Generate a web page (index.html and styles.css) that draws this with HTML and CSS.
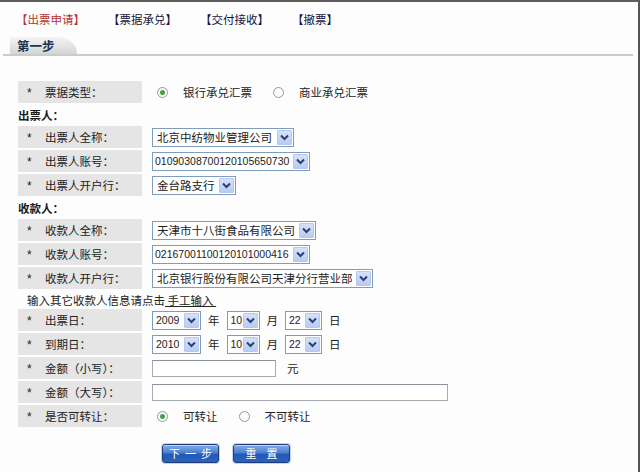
FILE: index.html
```html
<!DOCTYPE html>
<html lang="zh-CN">
<head>
<meta charset="utf-8">
<title>出票申请</title>
<link rel="stylesheet" href="styles.css">
</head>
<body>
<div class="page">
  <nav class="topnav">
    <a class="nav-item active">【出票申请】</a>
    <a class="nav-item">【票据承兑】</a>
    <a class="nav-item">【交付接收】</a>
    <a class="nav-item">【撤票】</a>
  </nav>
  <div class="stepbar"><span class="step-tab">第一步</span></div>

  <form class="form">
    <div class="row">
      <div class="label"><span class="star">*</span>票据类型：</div>
      <div class="field">
        <span class="radio checked"></span><span class="radio-text">银行承兑汇票</span>
        <span class="radio"></span><span class="radio-text">商业承兑汇票</span>
      </div>
    </div>

    <div class="group-title">出票人：</div>
    <div class="row">
      <div class="label"><span class="star">*</span>出票人全称：</div>
      <div class="field">
        <span class="select sel-drawer"><span class="sel-text">北京中纺物业管理公司</span><span class="sel-arrow"><svg viewBox="0 0 15 15" width="15" height="15"><path d="M4 5.5 L7.5 9 L11 5.5" fill="none" stroke="#2c3f73" stroke-width="2"/></svg></span></span>
      </div>
    </div>
    <div class="row">
      <div class="label"><span class="star">*</span>出票人账号：</div>
      <div class="field">
        <span class="select sel-acct"><span class="sel-text num">01090308700120105650730</span><span class="sel-arrow"><svg viewBox="0 0 15 15" width="15" height="15"><path d="M4 5.5 L7.5 9 L11 5.5" fill="none" stroke="#2c3f73" stroke-width="2"/></svg></span></span>
      </div>
    </div>
    <div class="row">
      <div class="label"><span class="star">*</span>出票人开户行：</div>
      <div class="field">
        <span class="select sel-bank1"><span class="sel-text">金台路支行</span><span class="sel-arrow"><svg viewBox="0 0 15 15" width="15" height="15"><path d="M4 5.5 L7.5 9 L11 5.5" fill="none" stroke="#2c3f73" stroke-width="2"/></svg></span></span>
      </div>
    </div>

    <div class="group-title">收款人：</div>
    <div class="row">
      <div class="label"><span class="star">*</span>收款人全称：</div>
      <div class="field">
        <span class="select sel-payee"><span class="sel-text">天津市十八街食品有限公司</span><span class="sel-arrow"><svg viewBox="0 0 15 15" width="15" height="15"><path d="M4 5.5 L7.5 9 L11 5.5" fill="none" stroke="#2c3f73" stroke-width="2"/></svg></span></span>
      </div>
    </div>
    <div class="row">
      <div class="label"><span class="star">*</span>收款人账号：</div>
      <div class="field">
        <span class="select sel-acct"><span class="sel-text num">02167001100120101000416</span><span class="sel-arrow"><svg viewBox="0 0 15 15" width="15" height="15"><path d="M4 5.5 L7.5 9 L11 5.5" fill="none" stroke="#2c3f73" stroke-width="2"/></svg></span></span>
      </div>
    </div>
    <div class="row">
      <div class="label"><span class="star">*</span>收款人开户行：</div>
      <div class="field">
        <span class="select sel-bank2"><span class="sel-text">北京银行股份有限公司天津分行营业部</span><span class="sel-arrow"><svg viewBox="0 0 15 15" width="15" height="15"><path d="M4 5.5 L7.5 9 L11 5.5" fill="none" stroke="#2c3f73" stroke-width="2"/></svg></span></span>
      </div>
    </div>
    <div class="hint">输入其它收款人信息请点击<a class="hint-link">&nbsp;手工输入&nbsp;</a></div>

    <div class="row">
      <div class="label"><span class="star">*</span>出票日：</div>
      <div class="field dates">
        <span class="select sel-year"><span class="sel-text num">2009</span><span class="sel-arrow"><svg viewBox="0 0 15 15" width="15" height="15"><path d="M4 5.5 L7.5 9 L11 5.5" fill="none" stroke="#2c3f73" stroke-width="2"/></svg></span></span>
        <span class="unit">年</span>
        <span class="select sel-month"><span class="sel-text num">10</span><span class="sel-arrow"><svg viewBox="0 0 15 15" width="15" height="15"><path d="M4 5.5 L7.5 9 L11 5.5" fill="none" stroke="#2c3f73" stroke-width="2"/></svg></span></span>
        <span class="unit">月</span>
        <span class="select sel-day"><span class="sel-text num">22</span><span class="sel-arrow"><svg viewBox="0 0 15 15" width="15" height="15"><path d="M4 5.5 L7.5 9 L11 5.5" fill="none" stroke="#2c3f73" stroke-width="2"/></svg></span></span>
        <span class="unit">日</span>
      </div>
    </div>
    <div class="row">
      <div class="label"><span class="star">*</span>到期日：</div>
      <div class="field dates">
        <span class="select sel-year"><span class="sel-text num">2010</span><span class="sel-arrow"><svg viewBox="0 0 15 15" width="15" height="15"><path d="M4 5.5 L7.5 9 L11 5.5" fill="none" stroke="#2c3f73" stroke-width="2"/></svg></span></span>
        <span class="unit">年</span>
        <span class="select sel-month"><span class="sel-text num">10</span><span class="sel-arrow"><svg viewBox="0 0 15 15" width="15" height="15"><path d="M4 5.5 L7.5 9 L11 5.5" fill="none" stroke="#2c3f73" stroke-width="2"/></svg></span></span>
        <span class="unit">月</span>
        <span class="select sel-day"><span class="sel-text num">22</span><span class="sel-arrow"><svg viewBox="0 0 15 15" width="15" height="15"><path d="M4 5.5 L7.5 9 L11 5.5" fill="none" stroke="#2c3f73" stroke-width="2"/></svg></span></span>
        <span class="unit">日</span>
      </div>
    </div>
    <div class="row">
      <div class="label"><span class="star">*</span>金额（小写）：</div>
      <div class="field">
        <span class="textbox tb-small"></span><span class="unit-yuan">元</span>
      </div>
    </div>
    <div class="row">
      <div class="label"><span class="star">*</span>金额（大写）：</div>
      <div class="field">
        <span class="textbox tb-large"></span>
      </div>
    </div>
    <div class="row">
      <div class="label"><span class="star">*</span>是否可转让：</div>
      <div class="field">
        <span class="radio checked"></span><span class="radio-text">可转让</span>
        <span class="radio"></span><span class="radio-text">不可转让</span>
      </div>
    </div>

    <div class="buttons">
      <span class="btn btn-next">下一步</span>
      <span class="btn btn-reset">重置</span>
    </div>
  </form>
</div>
</body>
</html>
```

FILE: styles.css
```css
* {
  box-sizing: border-box;
  margin: 0;
  padding: 0;
}

html, body {
  width: 640px;
  height: 472px;
  overflow: hidden;
}

body {
  font-family: "Noto Sans CJK SC", "Liberation Sans", sans-serif;
  font-size: 11.5px;
  color: #222;
  background: #fdfdfe;
}

.page {
  height: 472px;
  border-top: 2px solid #5e5e5e;
  border-right: 2px solid #555;
}

/* top navigation */
.topnav {
  display: flex;
  gap: 23px;
  height: 35px;
  padding: 9px 0 0 16px;
  line-height: 16px;
}

.nav-item {
  color: #14143a;
  text-decoration: none;
}

.nav-item.active {
  color: #b3322e;
}

/* step bar */
.stepbar {
  height: 19px;
  margin: 0 5px 0 3px;
  border-bottom: 2px solid #cbcbcb;
  padding-left: 7px;
  display: flex;
}

.step-tab {
  width: 67px;
  height: 17px;
  padding-left: 7px;
  line-height: 17px;
  font-size: 12.5px;
  font-weight: bold;
  color: #1d3656;
  background: linear-gradient(#f4f4f4, #d3d6d6);
  border-top-right-radius: 18px 17px;
}

/* form */
.form {
  margin-top: 25px;
  padding-left: 18px;
}

.row {
  display: flex;
  height: 22px;
  margin-bottom: 2px;
}

.label {
  width: 124px;
  background: #e5e5e5;
  padding-left: 9px;
  display: flex;
  align-items: center;
  line-height: 16px;
}

.star {
  width: 18px;
  font-family: "Liberation Sans", sans-serif;
  font-size: 12px;
  position: relative;
  top: 1px;
}

.field {
  display: flex;
  align-items: center;
  padding-left: 10px;
  line-height: 16px;
}

.group-title {
  height: 21px;
  line-height: 21px;
  font-weight: bold;
  color: #1a1a1a;
}

.hint {
  height: 18px;
  line-height: 18px;
  padding-left: 9px;
}

.hint-link {
  text-decoration: underline;
  color: #222;
}

/* radio */
.radio {
  width: 11px;
  height: 11px;
  border: 1px solid #8e9aa6;
  border-radius: 50%;
  background: #fbfbfb;
  margin-left: 5px;
  margin-right: 15px;
  display: flex;
  align-items: center;
  justify-content: center;
}

.radio.checked::after {
  content: "";
  width: 5px;
  height: 5px;
  border-radius: 50%;
  background: #45a045;
}

.radio-text {
  margin-right: 16px;
}

/* select */
.select {
  height: 19px;
  border: 1px solid #7f9db9;
  background: #fff;
  display: flex;
  align-items: center;
}

.sel-text {
  flex: 1;
  padding-left: 4px;
  white-space: nowrap;
  overflow: hidden;
}

.sel-text.num {
  font-family: "Liberation Sans", sans-serif;
  font-size: 10.5px;
  padding-left: 2px;
}

.sel-arrow {
  width: 15px;
  height: 15px;
  margin-right: 1px;
  background: linear-gradient(#d6e2fb, #b9cbf3);
  border: 1px solid #b6c8ee;
  border-radius: 1px;
  display: flex;
}

.sel-arrow svg {
  margin: -1px;
}

.sel-drawer { width: 142px; }
.sel-acct { width: 158px; }
.sel-bank1 { width: 84px; }
.sel-payee { width: 164px; }
.sel-bank2 { width: 221px; }
.sel-year { width: 49px; }
.sel-month { width: 33px; }
.sel-day { width: 37px; }

.sel-year .sel-text.num,
.sel-month .sel-text.num,
.sel-day .sel-text.num {
  padding-left: 3px;
}

.dates {
  gap: 7px;
}

/* text boxes */
.textbox {
  height: 17px;
  border: 1px solid #a4abb3;
  border-top-color: #8a939c;
  background: #fff;
}

.tb-small { width: 124px; }
.tb-large { width: 296px; }

.unit-yuan {
  margin-left: 11px;
}

/* buttons */
.buttons {
  display: flex;
  gap: 14px;
  margin-top: 17px;
  padding-left: 144px;
}

.btn {
  width: 57px;
  height: 19px;
  border: 1px solid #1c3c7c;
  border-radius: 3px;
  background: linear-gradient(#86aee8 0%, #4a7fd0 45%, #245ab6 55%, #2a62bd 100%);
  box-shadow: 0 0 0 1px #c9d4ea, inset 0 1px 0 rgba(255,255,255,0.5);
  color: #fff;
  font-size: 11px;
  line-height: 17px;
  text-align: center;
  white-space: nowrap;
  overflow: hidden;
}

.btn-next {
  letter-spacing: 5px;
  text-indent: 5px;
}

.btn-reset {
  letter-spacing: 10px;
  text-indent: 10px;
}
```
